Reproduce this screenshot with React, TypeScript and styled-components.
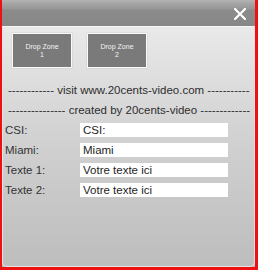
import React from "react";
import styled, { createGlobalStyle } from "styled-components";

const Global = createGlobalStyle`
  html, body { margin: 0; padding: 0; background: #ffffff; }
  body { font-family: "Liberation Sans", Arial, sans-serif; }
  * { box-sizing: border-box; }
`;

const Frame = styled.div`
  width: 258px;
  height: 270px;
  border-style: solid;
  border-color: #ee1111;
  border-width: 0 3px 3px 2px;
  display: flex;
  flex-direction: column;
  background: #b8b8b8;
  overflow: hidden;
`;

const Header = styled.div`
  height: 26px;
  flex: none;
  display: flex;
  align-items: center;
  justify-content: flex-end;
  padding: 1px 9px 0 0;
  background: linear-gradient(
    to bottom,
    #b3b3b3 0px,
    #a4a4a4 4px,
    #969696 9px,
    #8b8b8b 10px,
    #878787 26px
  );
`;

const Close = styled.button`
  width: 12px;
  height: 12px;
  padding: 0;
  border: 0;
  background: transparent;
  display: block;
  cursor: pointer;
`;

const Panel = styled.div`
  flex: 1;
  display: flex;
  flex-direction: column;
  border: 1px solid #e4e4e4;
  border-top-color: #f6f6f6;
  border-radius: 0 0 5px 5px;
  background: linear-gradient(to bottom, #e9e9e9 0%, #d2d2d2 45%, #bdbdbd 100%);
  padding: 6px 0 0 0;
  overflow: hidden;
`;

const DropRow = styled.div`
  display: flex;
  gap: 15px;
  padding-left: 9px;
`;

const DropZone = styled.div`
  width: 60px;
  height: 35px;
  background: #7a7a7a;
  border: 1px solid #fafafa;
  box-shadow: 0 0 1px rgba(0, 0, 0, 0.25);
  color: #f4f4f4;
  font-size: 7px;
  line-height: 8px;
  text-align: center;
  display: flex;
  align-items: center;
  justify-content: center;
  padding-top: 1px;
`;

const Banner = styled.div`
  margin-top: 12px;
  display: flex;
  flex-direction: column;
  padding-left: 5px;
`;

const BannerLine = styled.div`
  white-space: pre;
  font-size: 11.5px;
  line-height: 20px;
  color: #2e2e2e;
`;

const Fields = styled.div`
  margin-top: 3px;
  display: flex;
  flex-direction: column;
  gap: 6px;
  padding-left: 2px;
`;

const FieldRow = styled.div`
  display: grid;
  grid-template-columns: 75px 148px;
  align-items: center;
  height: 14px;
`;

const Label = styled.label`
  font-size: 11.5px;
  color: #333333;
  line-height: 14px;
`;

const Input = styled.input`
  width: 148px;
  height: 14px;
  border: 0;
  outline: none;
  background: #ffffff;
  padding: 0 3px;
  margin: 0;
  font-family: "Liberation Sans", Arial, sans-serif;
  font-size: 11.5px;
  color: #1e1e1e;
`;

const dashes = (n: number) => "-".repeat(n);

const fields = [
  { label: "CSI:", value: "CSI:" },
  { label: "Miami:", value: "Miami" },
  { label: "Texte 1:", value: "Votre texte ici" },
  { label: "Texte 2:", value: "Votre texte ici" },
];

export default function App() {
  return (
    <>
      <Global />
      <Frame>
        <Header>
          <Close aria-label="close">
            <svg width="12" height="12" viewBox="0 0 12 12">
              <path d="M1 1 L11 11 M11 1 L1 11" stroke="#ffffff" strokeWidth="2.2" strokeLinecap="square" />
            </svg>
          </Close>
        </Header>
        <Panel>
          <DropRow>
            <DropZone>Drop Zone<br />1</DropZone>
            <DropZone>Drop Zone<br />2</DropZone>
          </DropRow>
          <Banner>
            <BannerLine>{`${dashes(12)} visit www.20cents-video.com ${dashes(11)}`}</BannerLine>
            <BannerLine>{`${dashes(15)} created by 20cents-video ${dashes(13)}`}</BannerLine>
          </Banner>
          <Fields>
            {fields.map((f) => (
              <FieldRow key={f.label}>
                <Label>{f.label}</Label>
                <Input defaultValue={f.value} />
              </FieldRow>
            ))}
          </Fields>
        </Panel>
      </Frame>
    </>
  );
}
